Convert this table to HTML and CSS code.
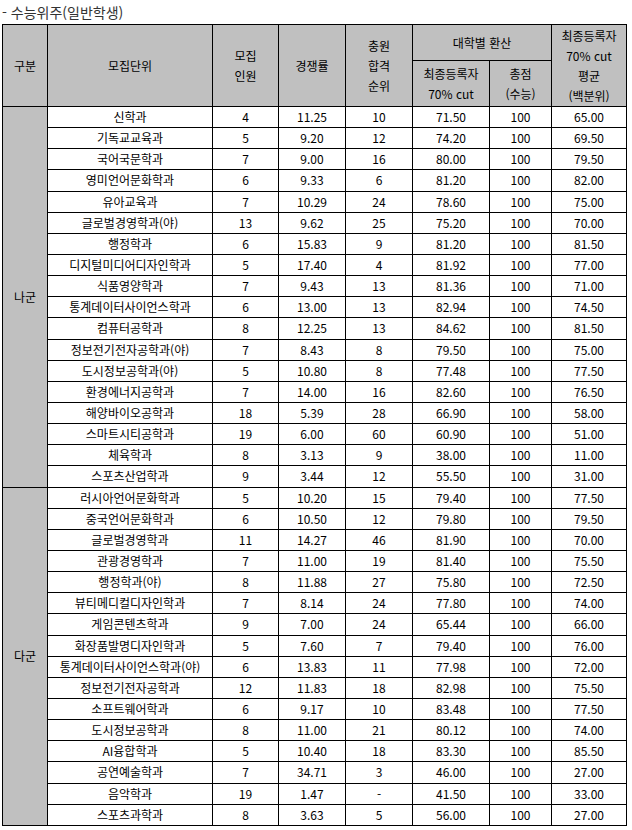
FILE: index.html
```html
<!DOCTYPE html>
<html lang="ko">
<head>
<meta charset="utf-8">
<title>수능위주(일반학생)</title>
<link rel="stylesheet" href="styles.css">
</head>
<body>
<div class="page">
<p class="title">- 수능위주(일반학생)</p>
<table class="result">
<colgroup>
<col class="c-group"><col class="c-unit"><col class="c-num"><col class="c-rate"><col class="c-rank"><col class="c-cut"><col class="c-total"><col class="c-avg">
</colgroup>
<thead>
<tr class="h1">
<th rowspan="2">구분</th>
<th rowspan="2">모집단위</th>
<th rowspan="2">모집<br>인원</th>
<th rowspan="2">경쟁률</th>
<th rowspan="2">충원<br>합격<br>순위</th>
<th colspan="2">대학별 환산</th>
<th rowspan="2">최종등록자<br>70% cut<br>평균<br>(백분위)</th>
</tr>
<tr class="h2">
<th>최종등록자<br>70% cut</th>
<th>총점<br>(수능)</th>
</tr>
</thead>
<tbody>
<tr><td class="grp" rowspan="18">나군</td><td>신학과</td><td>4</td><td>11.25</td><td>10</td><td>71.50</td><td>100</td><td>65.00</td></tr>
<tr><td>기독교교육과</td><td>5</td><td>9.20</td><td>12</td><td>74.20</td><td>100</td><td>69.50</td></tr>
<tr><td>국어국문학과</td><td>7</td><td>9.00</td><td>16</td><td>80.00</td><td>100</td><td>79.50</td></tr>
<tr><td>영미언어문화학과</td><td>6</td><td>9.33</td><td>6</td><td>81.20</td><td>100</td><td>82.00</td></tr>
<tr><td>유아교육과</td><td>7</td><td>10.29</td><td>24</td><td>78.60</td><td>100</td><td>75.00</td></tr>
<tr><td>글로벌경영학과(야)</td><td>13</td><td>9.62</td><td>25</td><td>75.20</td><td>100</td><td>70.00</td></tr>
<tr><td>행정학과</td><td>6</td><td>15.83</td><td>9</td><td>81.20</td><td>100</td><td>81.50</td></tr>
<tr><td>디지털미디어디자인학과</td><td>5</td><td>17.40</td><td>4</td><td>81.92</td><td>100</td><td>77.00</td></tr>
<tr><td>식품영양학과</td><td>7</td><td>9.43</td><td>13</td><td>81.36</td><td>100</td><td>71.00</td></tr>
<tr><td>통계데이터사이언스학과</td><td>6</td><td>13.00</td><td>13</td><td>82.94</td><td>100</td><td>74.50</td></tr>
<tr><td>컴퓨터공학과</td><td>8</td><td>12.25</td><td>13</td><td>84.62</td><td>100</td><td>81.50</td></tr>
<tr><td>정보전기전자공학과(야)</td><td>7</td><td>8.43</td><td>8</td><td>79.50</td><td>100</td><td>75.00</td></tr>
<tr><td>도시정보공학과(야)</td><td>5</td><td>10.80</td><td>8</td><td>77.48</td><td>100</td><td>77.50</td></tr>
<tr><td>환경에너지공학과</td><td>7</td><td>14.00</td><td>16</td><td>82.60</td><td>100</td><td>76.50</td></tr>
<tr><td>해양바이오공학과</td><td>18</td><td>5.39</td><td>28</td><td>66.90</td><td>100</td><td>58.00</td></tr>
<tr><td>스마트시티공학과</td><td>19</td><td>6.00</td><td>60</td><td>60.90</td><td>100</td><td>51.00</td></tr>
<tr><td>체육학과</td><td>8</td><td>3.13</td><td>9</td><td>38.00</td><td>100</td><td>11.00</td></tr>
<tr><td>스포츠산업학과</td><td>9</td><td>3.44</td><td>12</td><td>55.50</td><td>100</td><td>31.00</td></tr>
<tr><td class="grp" rowspan="16">다군</td><td>러시아언어문화학과</td><td>5</td><td>10.20</td><td>15</td><td>79.40</td><td>100</td><td>77.50</td></tr>
<tr><td>중국언어문화학과</td><td>6</td><td>10.50</td><td>12</td><td>79.80</td><td>100</td><td>79.50</td></tr>
<tr><td>글로벌경영학과</td><td>11</td><td>14.27</td><td>46</td><td>81.90</td><td>100</td><td>70.00</td></tr>
<tr><td>관광경영학과</td><td>7</td><td>11.00</td><td>19</td><td>81.40</td><td>100</td><td>75.50</td></tr>
<tr><td>행정학과(야)</td><td>8</td><td>11.88</td><td>27</td><td>75.80</td><td>100</td><td>72.50</td></tr>
<tr><td>뷰티메디컬디자인학과</td><td>7</td><td>8.14</td><td>24</td><td>77.80</td><td>100</td><td>74.00</td></tr>
<tr><td>게임콘텐츠학과</td><td>9</td><td>7.00</td><td>24</td><td>65.44</td><td>100</td><td>66.00</td></tr>
<tr><td>화장품발명디자인학과</td><td>5</td><td>7.60</td><td>7</td><td>79.40</td><td>100</td><td>76.00</td></tr>
<tr><td>통계데이터사이언스학과(야)</td><td>6</td><td>13.83</td><td>11</td><td>77.98</td><td>100</td><td>72.00</td></tr>
<tr><td>정보전기전자공학과</td><td>12</td><td>11.83</td><td>18</td><td>82.98</td><td>100</td><td>75.50</td></tr>
<tr><td>소프트웨어학과</td><td>6</td><td>9.17</td><td>10</td><td>83.48</td><td>100</td><td>77.50</td></tr>
<tr><td>도시정보공학과</td><td>8</td><td>11.00</td><td>21</td><td>80.12</td><td>100</td><td>74.00</td></tr>
<tr><td>AI융합학과</td><td>5</td><td>10.40</td><td>18</td><td>83.30</td><td>100</td><td>85.50</td></tr>
<tr><td>공연예술학과</td><td>7</td><td>34.71</td><td>3</td><td>46.00</td><td>100</td><td>27.00</td></tr>
<tr><td>음악학과</td><td>19</td><td>1.47</td><td>-</td><td>41.50</td><td>100</td><td>33.00</td></tr>
<tr><td>스포츠과학과</td><td>8</td><td>3.63</td><td>5</td><td>56.00</td><td>100</td><td>27.00</td></tr>
</tbody>
</table>
</div>
</body>
</html>
```

FILE: styles.css
```css
html, body {
  margin: 0;
  padding: 0;
  background: #fff;
}

body {
  font-family: "Noto Sans CJK KR", "Noto Sans", sans-serif;
  color: #000;
}

.page {
  padding: 0 0 0 2px;
}

.title {
  margin: 0;
  height: 24px;
  line-height: 24px;
  font-size: 14px;
  color: #333;
}

.result {
  border-collapse: collapse;
  table-layout: fixed;
  width: 625px;
  font-size: 12px;
}

.c-group { width: 45px; }
.c-unit { width: 165px; }
.c-num { width: 66px; }
.c-rate { width: 67px; }
.c-rank { width: 67px; }
.c-cut { width: 77px; }
.c-total { width: 62px; }
.c-avg { width: 75px; }

.result th,
.result td {
  border: 1px solid #000;
  padding: 0;
  text-align: center;
  vertical-align: middle;
  line-height: 20px;
  white-space: nowrap;
}

.result th {
  background: #c0c0c0;
  font-weight: normal;
}

.result .h1 { height: 36px; }
.result .h2 { height: 46px; }

.result tbody tr { height: 21.15px; }

.result td {
  line-height: 16px;
}

.result td.grp {
  background: #c0c0c0;
}
```
